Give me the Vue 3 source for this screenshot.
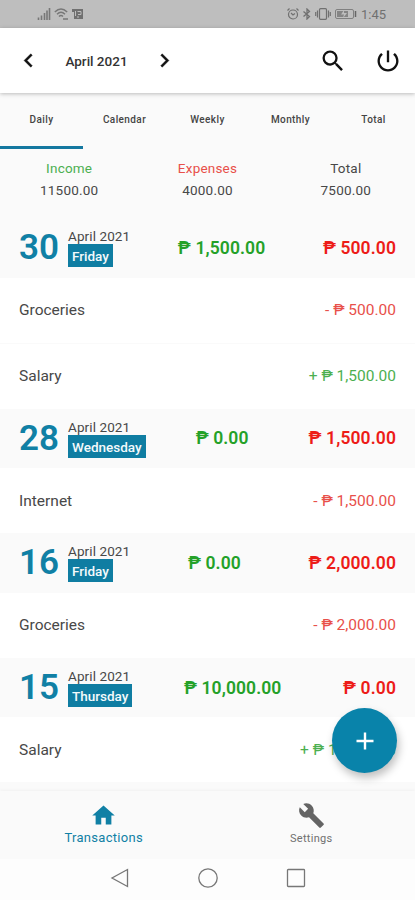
<script setup>
import {ref} from "vue";

const tabs = ["Daily", "Calendar", "Weekly", "Monthly", "Total"];
const activeTab = ref("Daily");
const month = ref("April 2021");

const totals = [
  {label: "Income", value: "11500.00", type: "income"},
  {label: "Expenses", value: "4000.00", type: "expense"},
  {label: "Total", value: "7500.00", type: "balance"},
];

const days = ref([
  {
    day: 30, weekday: "Friday", income: 1500, expense: 500,
    items: [
      {name: "Groceries", amount: -500},
      {name: "Salary", amount: 1500},
    ],
  },
  {day: 28, weekday: "Wednesday", income: 0, expense: 1500, items: [{name: "Internet", amount: -1500}]},
  {day: 16, weekday: "Friday", income: 0, expense: 2000, items: [{name: "Groceries", amount: -2000}]},
  {day: 15, weekday: "Thursday", income: 10000, expense: 0, items: [{name: "Salary", amount: 10000}]},
]);

const money = (value) => {
  return "₱ " + Math.abs(value).toLocaleString("en-US", {minimumFractionDigits: 2});
}
</script>

<template>
  <div class="app">
    <div class="status-bar">
      <div class="status-left">
        <svg width="14" height="12" viewBox="0 0 14 12"><path d="M1.5 9.500v2.500M4.500 7.500V12M7.500 5v7M10 2.500V12M12.500 0v12" stroke="#777" stroke-width="1.6" /></svg>
        <svg width="15" height="12" viewBox="0 0 15 12" fill="none" stroke="#777" stroke-width="1.4"><path d="M.8 4q6.200-6 12.400 0M3 6.300q4-4 8 0M5 8.500q2-2 4 0M9 11h5" /></svg>
        <svg width="11" height="10" viewBox="0 0 11 10"><path d="M0 0h11v10H2V3H0z" fill="#707070" /><path d="M3.500 2v5M5.500 2.500h3.500v3H6M5 8h2" fill="none" stroke="#bdbdbd" /></svg>
      </div>
      <div class="status-right">
        <svg width="12" height="12" viewBox="0 0 12 12" fill="none" stroke="#707070" stroke-width="1.2"><circle cx="6" cy="6.5" r="4.5" /><path d="M.5 2.5l2-2M11.5 2.5l-2-2M4 5l2 2 2-1.5" /></svg>
        <svg width="8" height="12" viewBox="0 0 8 12" fill="none" stroke="#707070" stroke-width="1.3"><path d="M.5 3.5l6 5L4 11V1l2.500 2.500-6 5" /></svg>
        <svg width="16" height="12" viewBox="0 0 16 12" fill="none" stroke="#707070" stroke-width="1.2"><rect x="4.5" y=".7" width="7" height="10.6" rx="1" /><path d="M2.5 2.5v7M.7 4v4M13.5 2.5v7M15.3 4v4" /></svg>
        <svg width="22" height="10" viewBox="0 0 22 10"><rect x=".5" y=".5" width="18" height="9" rx="1.500" fill="none" stroke="#808080" /><path d="M2 2h11v6H2z" fill="#858585" /><path d="M9 1L6 5.500h3L8 9l4-5H9z" fill="#bebebe" /><path d="M20.500 2v6" stroke="#666" stroke-width="1.5" /></svg>
        <span class="clock">1:45</span>
      </div>
    </div>

    <header class="top-bar">
      <svg class="chevron" viewBox="0 0 24 24"><path d="M15.4 7.4L14 6l-6 6 6 6 1.400-1.400L10.800 12z" /></svg>
      <span class="month">{{ month }}</span>
      <svg class="chevron" viewBox="0 0 24 24"><path d="M10 6L8.600 7.400l4.600 4.600-4.600 4.600L10 18l6-6z" /></svg>
      <svg class="search" viewBox="0 0 24 24"><path d="M15.500 14h-.79l-.28-.27A6.471 6.471 0 0 0 16 9.500 6.500 6.500 0 1 0 9.500 16c1.610 0 3.090-.59 4.230-1.570l.27.28v.79l5 4.990L20.490 19l-4.990-5zm-6 0C7.010 14 5 11.990 5 9.500S7.010 5 9.500 5 14 7.010 14 9.500 11.990 14 9.500 14z" /></svg>
      <svg class="power" viewBox="0 0 24 24"><path d="M13 3h-2v10h2V3zm4.830 2.170l-1.420 1.420C17.990 7.860 19 9.810 19 12c0 3.870-3.130 7-7 7s-7-3.130-7-7c0-2.190 1.010-4.140 2.580-5.420L6.170 5.170C4.230 6.820 3 9.260 3 12c0 4.970 4.030 9 9 9s9-4.030 9-9c0-2.740-1.230-5.180-3.170-6.830z" /></svg>
    </header>

    <nav class="tabs">
      <button v-for="tab in tabs" :key="tab" :class="{active: tab === activeTab}" @click="activeTab = tab">{{ tab }}</button>
    </nav>

    <section class="totals">
      <div v-for="total in totals" :key="total.label" class="total">
        <span :class="total.type">{{ total.label }}</span>
        <span>{{ total.value }}</span>
      </div>
    </section>

    <main class="list">
      <section v-for="entry in days" :key="entry.day">
        <div class="day">
          <div class="date">
            <span class="number">{{ entry.day }}</span>
            <div class="date-text">
              <span class="date-month">{{ month }}</span>
              <span class="weekday">{{ entry.weekday }}</span>
            </div>
          </div>
          <span class="day-income">{{ money(entry.income) }}</span>
          <span class="day-expense">{{ money(entry.expense) }}</span>
        </div>
        <div v-for="item in entry.items" :key="item.name" class="item">
          <span>{{ item.name }}</span>
          <span :class="item.amount < 0 ? 'expense' : 'income'">{{ item.amount < 0 ? "-" : "+" }} {{ money(item.amount) }}</span>
        </div>
      </section>
      <button class="add">
        <svg width="18" height="18" viewBox="0 0 18 18"><path d="M9 .5v17M.5 9h17" stroke="#fff" stroke-width="2.4" /></svg>
      </button>
    </main>

    <nav class="bottom-nav">
      <div class="nav-item selected">
        <svg width="27" height="27" viewBox="0 0 24 24"><path d="M10 20v-6h4v6h5v-8h3L12 3 2 12h3v8z" /></svg>
        <span>Transactions</span>
      </div>
      <div class="nav-item">
        <svg width="27" height="27" viewBox="0 0 24 24"><path d="M22.700 19l-9.100-9.100c.9-2.300.4-5-1.500-6.900-2-2-5-2.400-7.400-1.300L9 6 6 9 1.600 4.700C.4 7.100.9 10.100 2.900 12.100c1.900 1.900 4.600 2.400 6.900 1.500l9.100 9.100c.4.4 1 .4 1.400 0l2.300-2.300c.5-.4.5-1.100.1-1.400z" /></svg>
        <span>Settings</span>
      </div>
    </nav>

    <div class="system-nav">
      <svg width="20" height="20" viewBox="0 0 20 20"><path d="M17.500 1.500v17L2 10z" /></svg>
      <svg width="20" height="20" viewBox="0 0 20 20"><circle cx="10" cy="10" r="9.2" /></svg>
      <svg width="20" height="20" viewBox="0 0 20 20"><rect x="1.5" y="1.5" width="17" height="17" rx=".8" /></svg>
    </div>
  </div>
</template>

<style>
body {
  margin: 0;
}
</style>

<style scoped>
.app {
  display: flex;
  flex-direction: column;
  width: 415px;
  height: 900px;
  overflow: hidden;
  background: #fafafa;
  color: #484848;
  font-family: Roboto, "Noto Sans", sans-serif;
}
button {
  border: 0;
  padding: 0;
  background: none;
  font-family: inherit;
}
.status-bar {
  display: flex;
  justify-content: space-between;
  flex: none;
  height: 28px;
  padding: 0 28px 0 37px;
  box-sizing: border-box;
  background: #bebebe;
}
.status-left, .status-right {
  display: flex;
  align-items: center;
  gap: 3px;
}
.status-right {
  gap: 4px;
}
.clock {
  width: 26px;
  color: #707070;
  font-size: 13px;
  white-space: nowrap;
}
.top-bar {
  display: flex;
  align-items: center;
  flex: none;
  height: 65px;
  padding: 0 13px 0 15px;
  box-sizing: border-box;
  background: #fff;
  box-shadow: 0 1px 4px rgba(0, 0, 0, 0.25);
  z-index: 1;
}
.chevron {
  width: 27px;
  height: 27px;
  fill: #111;
  stroke: #111;
  stroke-width: 0.3;
}
.month {
  width: 109px;
  color: #333;
  font-size: 13.5px;
  font-weight: 500;
  text-align: center;
}
.search {
  width: 28px;
  height: 28px;
  margin-left: auto;
  fill: #111;
}
.power {
  width: 28px;
  height: 28px;
  margin-left: 27px;
  fill: #111;
}
.tabs {
  display: flex;
  flex: none;
  height: 56px;
}
.tabs button {
  flex: 1;
  box-sizing: border-box;
  border-bottom: 3px solid transparent;
  color: #444;
  font-size: 10px;
  font-weight: 500;
  letter-spacing: 0.4px;
}
.tabs .active {
  border-bottom-color: #1478a0;
}
.totals {
  display: flex;
  flex: none;
  height: 69px;
}
.total {
  display: flex;
  flex: 1;
  flex-direction: column;
  align-items: center;
  padding-top: 9px;
  font-size: 13.5px;
  line-height: 21.5px;
  letter-spacing: 0.2px;
}
.income {
  color: #4caf50;
}
.expense {
  color: #e8504a;
}
.list {
  position: relative;
  flex: none;
  height: 573px;
}
.day {
  display: flex;
  justify-content: space-between;
  align-items: center;
  height: 59.6px;
  padding: 0 19px;
  font-size: 17.5px;
  font-weight: 600;
  letter-spacing: 0.1px;
}
.date {
  display: flex;
  align-items: center;
  letter-spacing: 0;
}
.number {
  width: 49px;
  color: #1080a5;
  font-size: 35px;
  line-height: 42px;
  padding-top: 1px;
}
.date-text {
  display: flex;
  flex-direction: column;
  align-items: flex-start;
  font-size: 13.5px;
  line-height: 16px;
}
.date-month {
  font-weight: 400;
  letter-spacing: 0.1px;
}
.weekday {
  height: 23px;
  padding: 0 4px;
  background: #0f7da2;
  color: #f4fafc;
  font-weight: 500;
  line-height: 24px;
}
.day-income {
  margin-right: 10px;
  color: #24a128;
}
.day-expense {
  color: #ed1c18;
}
.item {
  display: flex;
  justify-content: space-between;
  align-items: center;
  height: 65px;
  padding: 0 19px;
  background: #fff;
  font-size: 15.5px;
}
.item + .item {
  border-top: 1px solid #fafafa;
}
.add {
  position: absolute;
  right: 18px;
  bottom: 18px;
  display: flex;
  justify-content: center;
  align-items: center;
  width: 65px;
  height: 65px;
  border-radius: 50%;
  background: #0983aa;
  box-shadow: 2px 5px 8px rgba(0, 0, 0, 0.25);
}
.bottom-nav {
  display: flex;
  flex: none;
  height: 68px;
  background: #fafafa;
  box-shadow: 0 -1px 3px rgba(0, 0, 0, 0.04);
}
.nav-item {
  display: flex;
  flex: 1;
  flex-direction: column;
  align-items: center;
  padding-top: 11px;
  color: #707070;
  font-size: 11px;
  line-height: 19px;
  letter-spacing: 0.3px;
}
.nav-item svg {
  fill: #646464;
}
.selected {
  color: #1080a5;
  font-size: 13px;
  line-height: 18px;
}
.selected svg {
  fill: #1080a5;
}
.system-nav {
  display: flex;
  justify-content: center;
  gap: 68px;
  flex: 1;
  padding-top: 9px;
  background: #fdfdfd;
}
.system-nav svg {
  fill: none;
  stroke: #777;
  stroke-width: 1.3;
}
</style>
